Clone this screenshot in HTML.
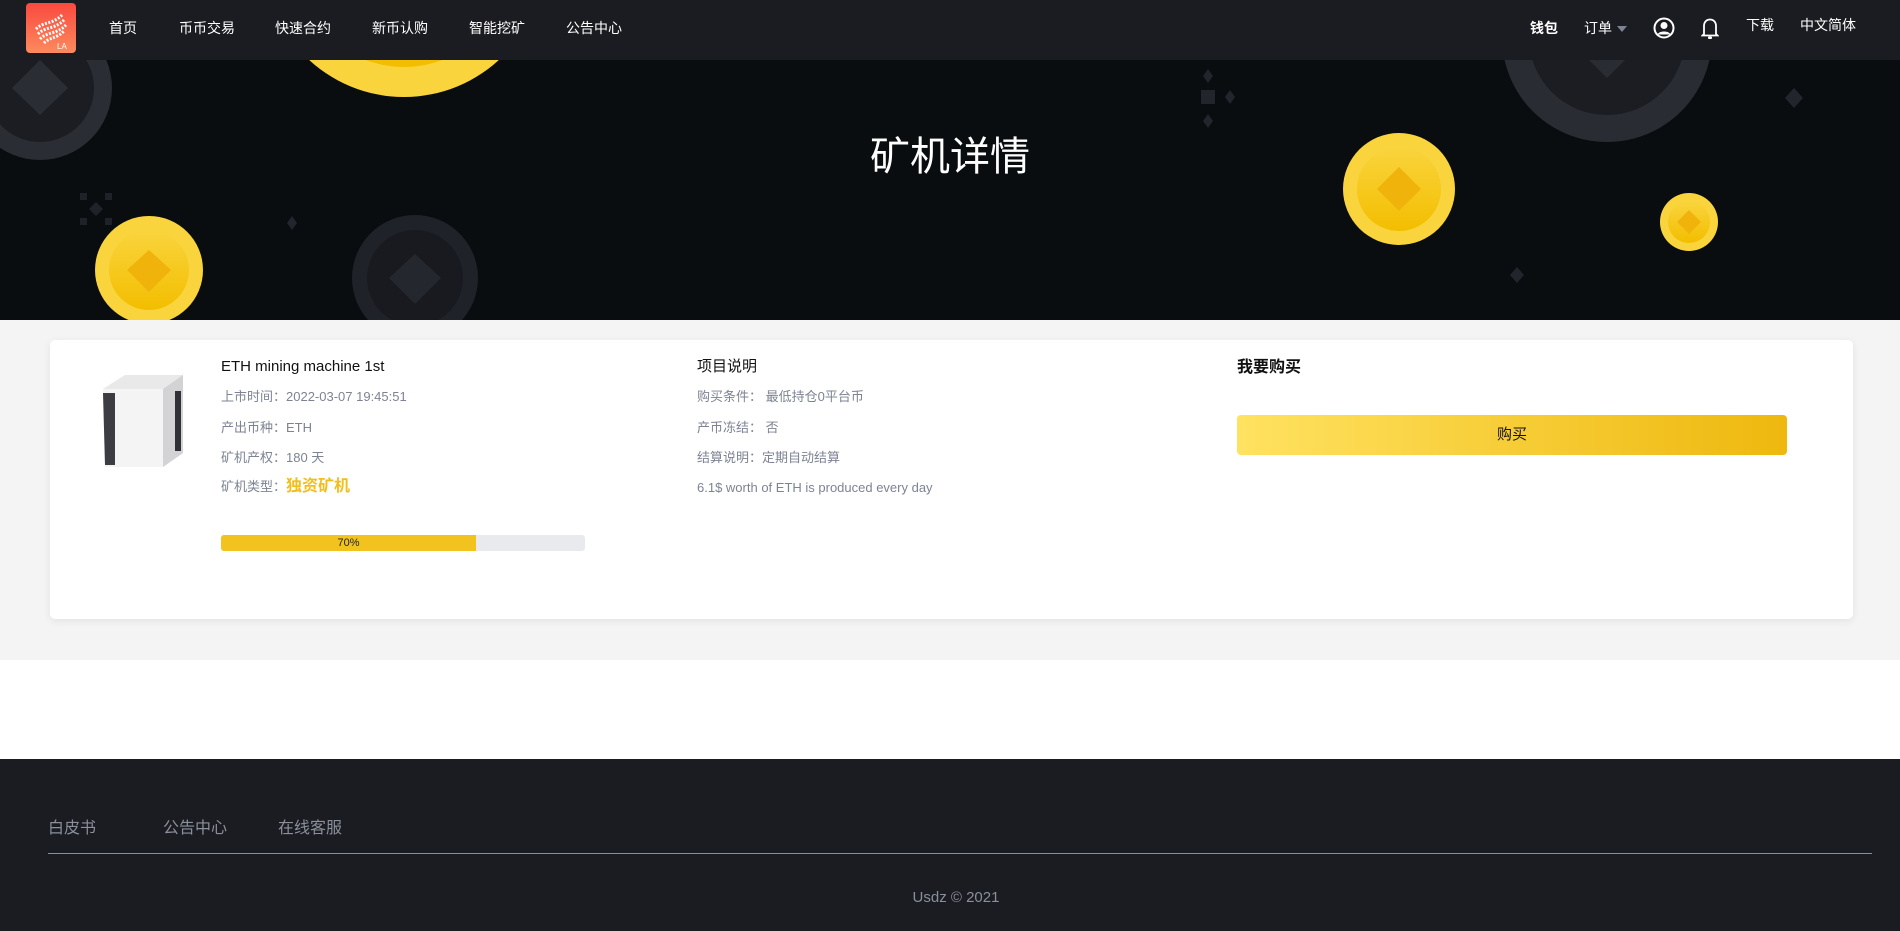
<!DOCTYPE html>
<html><head><meta charset="utf-8">
<style>
*{margin:0;padding:0;box-sizing:border-box}
body{width:1900px;height:931px;overflow:hidden;font-family:"Liberation Sans","Noto Sans CJK SC",sans-serif;background:#fff;position:relative}
.nav{position:absolute;left:0;top:0;width:1900px;height:60px;background:#1b1c21;z-index:3}
.nav span{position:absolute;top:19px;font-size:14px;color:#fff;line-height:18px}
.hero{position:absolute;left:0;top:60px;width:1900px;height:260px;background:#0a0d10;overflow:hidden}
.gray{position:absolute;left:0;top:320px;width:1900px;height:340px;background:#f4f4f4}
.card{position:absolute;left:50px;top:340px;width:1803px;height:279px;background:#fff;border-radius:5px;box-shadow:0 2px 8px rgba(0,0,0,.08)}
.t{position:absolute;font-size:13px;color:#7d8393;line-height:16px;white-space:nowrap}
.footer{position:absolute;left:0;top:759px;width:1900px;height:172px;background:#1b1c21}
</style></head><body>
<div class="nav">
  <svg style="position:absolute;left:26px;top:3px" width="50" height="50" viewBox="0 0 50 50">
    <defs><linearGradient id="lg" x1="0" y1="0" x2="0" y2="1"><stop offset="0" stop-color="#f9493f"/><stop offset="1" stop-color="#fd8a5d"/></linearGradient></defs>
    <rect width="50" height="50" rx="4" fill="url(#lg)"/>
    <path d="M10 26 C18 18 26 22 36 12 M12 31 C20 23 28 27 38 17 M14 36 C22 28 30 32 40 22 M18 40 C24 34 30 36 38 28" stroke="#fff" stroke-width="3" fill="none" stroke-dasharray="2 1.5"/>
    <text x="31" y="46" font-size="8" fill="#fff" font-family="Liberation Sans">LA</text>
  </svg>
  <span style="left:109px">首页</span>
  <span style="left:179px">币币交易</span>
  <span style="left:275px">快速合约</span>
  <span style="left:372px">新币认购</span>
  <span style="left:469px">智能挖矿</span>
  <span style="left:566px">公告中心</span>
  <span style="left:1530px;font-weight:bold">钱包</span>
  <span style="left:1584px">订单</span>
  <svg style="position:absolute;left:1617px;top:26px" width="10" height="6"><path d="M0 0H10L5 6Z" fill="#7d8393"/></svg>
  <svg style="position:absolute;left:1653px;top:17px" width="22" height="22" viewBox="0 0 22 22"><circle cx="11" cy="11" r="9.5" fill="none" stroke="#fff" stroke-width="2"/><circle cx="11" cy="8.5" r="3.5" fill="#fff"/><path d="M4.5 17.5C6 13.5 16 13.5 17.5 17.5Z" fill="#fff"/></svg>
  <svg style="position:absolute;left:1701px;top:17px" width="18" height="23" viewBox="0 0 18 23"><path d="M3 17V9C3 5 5.5 2.5 9 2.5S15 5 15 9V17L16.5 18.5H1.5Z" fill="none" stroke="#fff" stroke-width="1.8"/><rect x="7" y="19.5" width="4" height="2.5" rx="1" fill="#fff"/></svg>
  <span style="left:1746px;top:16px">下载</span>
  <span style="left:1800px;top:16px">中文简体</span>
</div>
<div class="hero">
<svg width="1900" height="260" style="position:absolute;left:0;top:0">
  <defs><linearGradient id="yg" x1="0" y1="0" x2="0" y2="1"><stop offset="0" stop-color="#f9d43d"/><stop offset="1" stop-color="#f3be00"/></linearGradient></defs>
  <circle cx="404" cy="-103" r="140" fill="#f9d43d"/><circle cx="404" cy="-103" r="110" fill="url(#yg)"/>
  <circle cx="40" cy="28" r="72" fill="#2a2d34"/><circle cx="40" cy="28" r="54" fill="#1b1d23"/><path d="M40 0L68 28L40 55L12 28Z" fill="#2a2d34"/>
  <rect x="80" y="133" width="7" height="7" fill="#1f2229"/><rect x="105" y="133" width="7" height="7" fill="#1f2229"/><rect x="80" y="158" width="7" height="7" fill="#1f2229"/><rect x="105" y="158" width="7" height="7" fill="#1f2229"/><path d="M96 142l7 7-7 7-7-7z" fill="#1f2229"/>
  <path d="M292 156l5 7-5 7-5-7z" fill="#22252c"/>
  <circle cx="149" cy="210" r="54" fill="#f9d43d"/><circle cx="149" cy="210" r="40" fill="url(#yg)"/><path d="M149 190l22 20-22 22-22-22z" fill="#efb30c"/>
  <circle cx="415" cy="218" r="63" fill="#202229"/><circle cx="415" cy="218" r="48" fill="#181a20"/><path d="M415 194l26 24-26 26-26-26z" fill="#24272e"/>
  <path d="M1208 9l5 7-5 7-5-7z" fill="#22252c"/><rect x="1201" y="30" width="14" height="14" fill="#22252c"/><path d="M1230 30l5 7-5 7-5-7z" fill="#22252c"/><path d="M1208 54l5 7-5 7-5-7z" fill="#22252c"/>
  <circle cx="1607" cy="-23" r="105" fill="#292c33"/><circle cx="1607" cy="-23" r="78" fill="#1b1d23"/><path d="M1607 18l-20-20h40z" fill="#292c33"/>
  <path d="M1794 28l9 10-9 10-9-10z" fill="#22252c"/>
  <path d="M1517 207l7 8-7 8-7-8z" fill="#22252c"/>
  <circle cx="1399" cy="129" r="56" fill="#f9d43d"/><circle cx="1399" cy="129" r="42" fill="url(#yg)"/><path d="M1399 107l22 22-22 22-22-22z" fill="#efb30c"/>
  <circle cx="1689" cy="162" r="29" fill="#f9d43d"/><circle cx="1689" cy="162" r="21" fill="url(#yg)"/><path d="M1689 150l12 12-12 12-12-12z" fill="#efb30c"/>
</svg>
<div style="position:absolute;left:0;width:1900px;top:72px;text-align:center;color:#fff;font-size:40px;line-height:50px">矿机详情</div>
</div>
<div class="gray"></div>
<div class="card">
  <svg style="position:absolute;left:45px;top:31px" width="94" height="98" viewBox="0 0 94 98">
    <path d="M8 18L30 4H88V82L68 96H10Z" fill="#e9e9ea"/>
    <path d="M8 18H68V96H10Z" fill="#f4f4f5"/>
    <path d="M8 22H20V94H10Z" fill="#3b3d42"/>
    <path d="M68 18L88 4V82L68 96Z" fill="#d3d3d5"/>
    <rect x="80" y="20" width="6" height="60" fill="#2f3136"/>
  </svg>
  <div class="t" style="left:171px;top:18px;font-size:15px;color:#111;line-height:18px">ETH mining machine 1st</div>
  <div class="t" style="left:171px;top:49px">上市时间：2022-03-07 19:45:51</div>
  <div class="t" style="left:171px;top:80px">产出币种：ETH</div>
  <div class="t" style="left:171px;top:110px">矿机产权：180 天</div>
  <div class="t" style="left:171px;top:139px">矿机类型：<b style="color:#f3be1a;font-size:16px">独资矿机</b></div>
  <div style="position:absolute;left:171px;top:195px;width:364px;height:16px;background:#e8eaed;border-radius:3px;overflow:hidden"><div style="width:255px;height:16px;background:#f2c21f"></div><div style="position:absolute;left:0;top:0;width:255px;text-align:center;font-size:11px;line-height:16px;color:#222">70%</div></div>
  <div class="t" style="left:647px;top:18px;font-size:15px;color:#111;line-height:18px">项目说明</div>
  <div class="t" style="left:647px;top:49px">购买条件： 最低持仓0平台币</div>
  <div class="t" style="left:647px;top:80px">产币冻结： 否</div>
  <div class="t" style="left:647px;top:110px">结算说明：定期自动结算</div>
  <div class="t" style="left:647px;top:140px">6.1$ worth of ETH is produced every day</div>
  <div class="t" style="left:1187px;top:18px;font-size:16px;font-weight:bold;color:#111;line-height:20px">我要购买</div>
  <div style="position:absolute;left:1187px;top:75px;width:550px;height:40px;border-radius:4px;background:linear-gradient(90deg,#ffe261,#eeb80e);text-align:center;font-size:15px;line-height:40px;color:#111">购买</div>
</div>
<div class="footer">
  <div style="position:absolute;left:48px;top:55px;font-size:16px;color:#8a8f9c">白皮书</div>
  <div style="position:absolute;left:163px;top:55px;font-size:16px;color:#8a8f9c">公告中心</div>
  <div style="position:absolute;left:278px;top:55px;font-size:16px;color:#8a8f9c">在线客服</div>
  <div style="position:absolute;left:48px;top:94px;width:1824px;height:1px;background:#8a8f9c"></div>
  <div style="position:absolute;left:6px;width:1900px;top:130px;text-align:center;font-size:15px;color:#8a8f9c">Usdz © 2021</div>
</div>
</body></html>
